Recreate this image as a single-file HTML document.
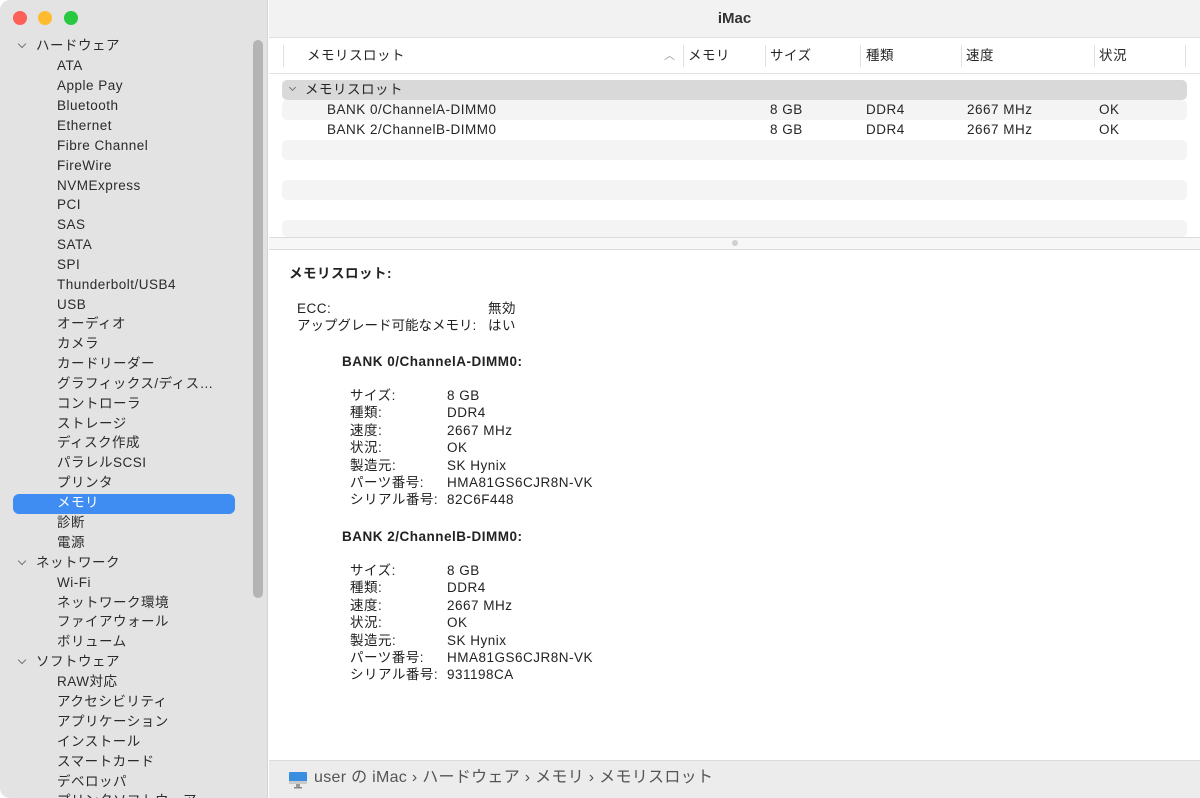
<!DOCTYPE html>
<html><head><meta charset="utf-8"><style>
*{margin:0;padding:0;box-sizing:border-box}
body{width:1200px;height:798px;overflow:hidden;background:#fff;font-family:"Liberation Sans","Noto Sans CJK JP",sans-serif;font-size:13.5px;letter-spacing:0.5px;color:#262626;position:relative}
.sb{position:absolute;left:0;top:0;width:268px;height:798px;background:#e3e3e3;border-right:1px solid #d4d4d4;border-radius:10px 0 0 10px;overflow:hidden}
.dot{position:absolute;top:11px;width:14px;height:14px;border-radius:50%}
.it{position:absolute;left:57px;height:20px;line-height:20px;white-space:nowrap;color:#2b2b2b}
.grp{left:36px}
.chev{position:absolute;left:19px;width:6px;height:6px;border-right:1.3px solid #777;border-bottom:1.3px solid #777;transform:rotate(45deg)}
.sel{position:absolute;left:13px;top:494px;width:222px;height:20px;background:#3f8cf3;border-radius:6px}
.scr{position:absolute;left:253px;top:40px;width:10px;height:558px;background:#b4b4b4;border-radius:5px}
.title{position:absolute;left:269px;top:0;width:931px;height:38px;background:#f2f2f2;border-bottom:1px solid #e0e0e0;text-align:center;line-height:38px;font-weight:bold;font-size:15px;color:#333;letter-spacing:0}
.t{position:absolute;white-space:nowrap;line-height:20px}
.hd{position:absolute;top:45px;height:22px;line-height:22px}
.vs{position:absolute;top:45px;width:1px;height:22px;background:#e0e0e0}
.stripe{position:absolute;left:282px;width:905px;height:20px;background:#f4f4f4;border-radius:5px}
.b{font-weight:bold}
.foot{position:absolute;left:269px;top:760px;width:931px;height:38px;background:#ececec;border-top:1px solid #dcdcdc}
</style></head><body>
<div class="sb">
<div class="dot" style="left:13px;background:#fe5f57"></div>
<div class="dot" style="left:38px;background:#febc2e"></div>
<div class="dot" style="left:64px;background:#28c840"></div>
<div class="sel"></div>
<div class="scr"></div>
<div class="chev" style="top:41px"></div><div class="it grp" style="top:36px">ハードウェア</div>
<div class="it" style="top:56px">ATA</div>
<div class="it" style="top:76px">Apple Pay</div>
<div class="it" style="top:96px">Bluetooth</div>
<div class="it" style="top:116px">Ethernet</div>
<div class="it" style="top:136px">Fibre Channel</div>
<div class="it" style="top:156px">FireWire</div>
<div class="it" style="top:176px">NVMExpress</div>
<div class="it" style="top:195px">PCI</div>
<div class="it" style="top:215px">SAS</div>
<div class="it" style="top:235px">SATA</div>
<div class="it" style="top:255px">SPI</div>
<div class="it" style="top:275px">Thunderbolt/USB4</div>
<div class="it" style="top:295px">USB</div>
<div class="it" style="top:314px">オーディオ</div>
<div class="it" style="top:334px">カメラ</div>
<div class="it" style="top:354px">カードリーダー</div>
<div class="it" style="top:374px">グラフィックス/ディス…</div>
<div class="it" style="top:394px">コントローラ</div>
<div class="it" style="top:414px">ストレージ</div>
<div class="it" style="top:433px">ディスク作成</div>
<div class="it" style="top:453px">パラレルSCSI</div>
<div class="it" style="top:473px">プリンタ</div>
<div class="it" style="top:493px;color:#fff">メモリ</div>
<div class="it" style="top:513px">診断</div>
<div class="it" style="top:533px">電源</div>
<div class="chev" style="top:558px"></div><div class="it grp" style="top:553px">ネットワーク</div>
<div class="it" style="top:573px">Wi-Fi</div>
<div class="it" style="top:593px">ネットワーク環境</div>
<div class="it" style="top:612px">ファイアウォール</div>
<div class="it" style="top:632px">ボリューム</div>
<div class="chev" style="top:657px"></div><div class="it grp" style="top:652px">ソフトウェア</div>
<div class="it" style="top:672px">RAW対応</div>
<div class="it" style="top:692px">アクセシビリティ</div>
<div class="it" style="top:712px">アプリケーション</div>
<div class="it" style="top:732px">インストール</div>
<div class="it" style="top:752px">スマートカード</div>
<div class="it" style="top:772px">デベロッパ</div>
<div class="it" style="top:791px">プリンタソフトウェア</div>
</div>
<div class="title">iMac</div>
<div style="position:absolute;left:269px;top:73px;width:931px;height:1px;background:#e2e2e2"></div>
<div class="vs" style="left:283px"></div>
<div class="hd" style="left:307px">メモリスロット</div>
<div class="hd" style="left:664px;color:#999;font-size:11px">︿</div>
<div class="vs" style="left:683px"></div><div class="hd" style="left:688px">メモリ</div>
<div class="vs" style="left:765px"></div><div class="hd" style="left:770px">サイズ</div>
<div class="vs" style="left:860px"></div><div class="hd" style="left:866px">種類</div>
<div class="vs" style="left:961px"></div><div class="hd" style="left:966px">速度</div>
<div class="vs" style="left:1094px"></div><div class="hd" style="left:1099px">状況</div>
<div class="vs" style="left:1185px"></div>
<div class="stripe" style="top:80px;background:#d9d9d9"></div>
<div class="chev" style="left:290px;top:85px;width:5px;height:5px"></div>
<div class="t" style="left:305px;top:80px">メモリスロット</div>
<div class="stripe" style="top:100px"></div>
<div class="stripe" style="top:140px"></div>
<div class="stripe" style="top:180px"></div>
<div class="stripe" style="top:220px;height:17px"></div>
<div class="t" style="left:327px;top:100px">BANK 0/ChannelA-DIMM0</div>
<div class="t" style="left:770px;top:100px">8 GB</div><div class="t" style="left:866px;top:100px">DDR4</div><div class="t" style="left:967px;top:100px">2667 MHz</div><div class="t" style="left:1099px;top:100px">OK</div>
<div class="t" style="left:327px;top:120px">BANK 2/ChannelB-DIMM0</div>
<div class="t" style="left:770px;top:120px">8 GB</div><div class="t" style="left:866px;top:120px">DDR4</div><div class="t" style="left:967px;top:120px">2667 MHz</div><div class="t" style="left:1099px;top:120px">OK</div>
<div style="position:absolute;left:269px;top:237px;width:931px;height:13px;border-top:1px solid #dcdcdc;border-bottom:1px solid #dcdcdc;background:#f7f7f7"></div>
<div style="position:absolute;left:732px;top:240px;width:6px;height:6px;border-radius:50%;background:#d0d0d0"></div>
<div style="line-height:17.4px;color:#222">
<div class="t b" style="left:289px;top:264px">メモリスロット:</div>
<div class="t" style="left:297px;top:299px">ECC:</div><div class="t" style="left:488px;top:299px">無効</div>
<div class="t" style="left:297px;top:316px;letter-spacing:0">アップグレード可能なメモリ:</div><div class="t" style="left:488px;top:316px">はい</div>
<div class="t b" style="left:342px;top:352px">BANK 0/ChannelA-DIMM0:</div>
<div class="t" style="left:350px;top:387px;line-height:17.4px">サイズ:<br>種類:<br>速度:<br>状況:<br>製造元:<br>パーツ番号:<br>シリアル番号:</div>
<div class="t" style="left:447px;top:387px;line-height:17.4px">8 GB<br>DDR4<br>2667 MHz<br>OK<br>SK Hynix<br>HMA81GS6CJR8N-VK<br>82C6F448</div>
<div class="t b" style="left:342px;top:527px">BANK 2/ChannelB-DIMM0:</div>
<div class="t" style="left:350px;top:562px;line-height:17.4px">サイズ:<br>種類:<br>速度:<br>状況:<br>製造元:<br>パーツ番号:<br>シリアル番号:</div>
<div class="t" style="left:447px;top:562px;line-height:17.4px">8 GB<br>DDR4<br>2667 MHz<br>OK<br>SK Hynix<br>HMA81GS6CJR8N-VK<br>931198CA</div>
</div>
<div class="foot">
<svg style="position:absolute;left:20px;top:11px" width="18" height="17" viewBox="0 0 18 17"><rect x="0" y="0" width="18" height="12" rx="1" fill="#3a8ee0"/><rect x="0" y="9" width="18" height="3" fill="#c9c9c9"/><rect x="7" y="12" width="4" height="3" fill="#999"/><rect x="5" y="15" width="8" height="1.5" fill="#888"/></svg>
<div class="t" style="left:45px;top:7px;font-size:16px;letter-spacing:0.3px;color:#555">user の iMac › ハードウェア › メモリ › メモリスロット</div>
</div>
</body></html>
